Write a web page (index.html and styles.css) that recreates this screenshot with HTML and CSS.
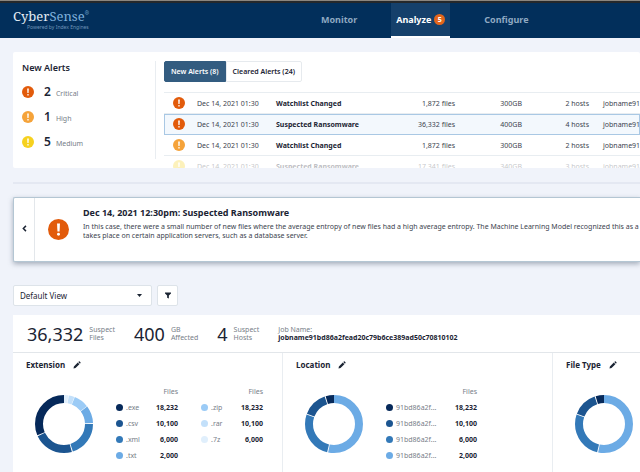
FILE: index.html
```html
<!DOCTYPE html>
<html lang="en">
<head>
  <meta charset="UTF-8">
  <title>CyberSense - Analyze</title>
  <meta name="viewport" content="width=device-width,initial-scale=1">
  <link rel="stylesheet" href="styles.css">
</head>
<body>
  <svg class="defs" aria-hidden="true">
    <symbol id="alert" viewBox="0 0 20 20">
      <circle cx="10" cy="10" r="10" fill="currentColor"/>
      <path d="M8.6 4.2h2.8l-.4 7.6H9z" fill="#fff"/>
      <circle cx="10" cy="14.6" r="1.4" fill="#fff"/>
    </symbol>
    <symbol id="pencil" viewBox="0 0 16 16">
      <path d="M1 15l.8-4L9.6 3.200l3.200 3.200L5 14.200zM10.600 2.200l1.200-1.200q.8-.6 1.600.1l1.500 1.500q.7.800.1 1.600l-1.200 1.200z" fill="currentColor"/>
    </symbol>
  </svg>

  <header class="topbar">
    <a class="logo" href="#">
      <span class="logo-name">Cyber<span class="logo-light">Sense</span><sup>®</sup></span>
      <span class="logo-sub">Powered by Index Engines</span>
    </a>
    <nav class="nav">
      <a href="#">Monitor</a>
      <a href="#" class="active">Analyze <span class="badge">5</span></a>
      <a href="#">Configure</a>
    </nav>
  </header>

  <main>
    <section class="card alerts">
      <div class="summary">
        <h2>New Alerts</h2>
        <ul>
          <li><svg class="icon critical"><use href="#alert"/></svg><b>2</b><span>Critical</span></li>
          <li><svg class="icon high"><use href="#alert"/></svg><b>1</b><span>High</span></li>
          <li><svg class="icon medium"><use href="#alert"/></svg><b>5</b><span>Medium</span></li>
        </ul>
      </div>
      <div class="alert-list">
        <div class="tabs">
          <button type="button" class="selected">New Alerts (8)</button>
          <button type="button">Cleared Alerts (24)</button>
        </div>
        <table class="alert-table">
          <colgroup><col class="c-icon"><col class="c-date"><col class="c-name"><col class="c-files"><col class="c-num"><col class="c-num"><col class="c-job"></colgroup>
          <tbody>
            <tr><td><svg class="icon critical"><use href="#alert"/></svg></td><td>Dec 14, 2021 01:30</td><th scope="row">Watchlist Changed</th><td class="num">1,872 files</td><td class="num">300GB</td><td class="num">2 hosts</td><td class="job">jobname91bd86a2</td></tr>
            <tr class="current"><td><svg class="icon critical"><use href="#alert"/></svg></td><td>Dec 14, 2021 01:30</td><th scope="row">Suspected Ransomware</th><td class="num">36,332 files</td><td class="num">400GB</td><td class="num">4 hosts</td><td class="job">jobname91bd86a2</td></tr>
            <tr><td><svg class="icon high"><use href="#alert"/></svg></td><td>Dec 14, 2021 01:30</td><th scope="row">Watchlist Changed</th><td class="num">1,872 files</td><td class="num">300GB</td><td class="num">2 hosts</td><td class="job">jobname91bd86a2</td></tr>
            <tr class="faded"><td><svg class="icon medium"><use href="#alert"/></svg></td><td>Dec 14, 2021 01:30</td><th scope="row">Suspected Ransomware</th><td class="num">17,341 files</td><td class="num">340GB</td><td class="num">3 hosts</td><td class="job">jobname91bd86a2</td></tr>
          </tbody>
        </table>
      </div>
    </section>

    <hr>

    <section class="card detail">
      <button type="button" class="prev" aria-label="Previous alert">
        <svg viewBox="0 0 8 12"><path d="M6.500 1.500L2 6l4.500 4.500" fill="none" stroke="currentColor" stroke-width="2.500"/></svg>
      </button>
      <svg class="icon-big critical"><use href="#alert"/></svg>
      <div class="detail-text">
        <h2>Dec 14, 2021 12:30pm: Suspected Ransomware</h2>
        <p>In this case, there were a small number of new files where the average entropy of new files had a high average entropy. The Machine Learning Model recognized this as a type<br>takes place on certain application servers, such as a database server.</p>
      </div>
    </section>

    <div class="toolbar">
      <div class="select">
        <select aria-label="View"><option>Default View</option></select>
        <svg viewBox="0 0 10 6"><path d="M0 0h10L5 6z" fill="currentColor"/></svg>
      </div>
      <button type="button" class="filter" aria-label="Filter">
        <svg viewBox="0 0 14 14"><path d="M0 0h14v2.500L9 7v7L5 12V7L0 2.500z" fill="currentColor"/></svg>
      </button>
    </div>

    <section class="card report">
      <div class="stats">
        <div class="stat"><strong>36,332</strong><span>Suspect<br>Files</span></div>
        <div class="stat"><strong>400</strong><span>GB<br>Affected</span></div>
        <div class="stat"><strong>4</strong><span>Suspect<br>Hosts</span></div>
        <div class="jobname">Job Name:<br><b>jobname91bd86a2fead20c79b6ce389ad50c70810102</b></div>
      </div>
      <div class="charts">
        <div class="chart">
          <h3>Extension <a href="#" aria-label="Edit extension"><svg><use href="#pencil"/></svg></a></h3>
          <div class="chart-body">
            <svg class="donut" viewBox="0 0 58 58">
              <g transform="rotate(-90 29 29)">
                <circle class="s7" cx="29" cy="29" r="25" pathLength="360" stroke-dasharray="9 351"/>
                <circle class="s6" cx="29" cy="29" r="25" pathLength="360" stroke-dasharray="11 349" stroke-dashoffset="-10"/>
                <circle class="s5" cx="29" cy="29" r="25" pathLength="360" stroke-dasharray="30 330" stroke-dashoffset="-22"/>
                <circle class="s4" cx="29" cy="29" r="25" pathLength="360" stroke-dasharray="35 325" stroke-dashoffset="-53"/>
                <circle class="s3" cx="29" cy="29" r="25" pathLength="360" stroke-dasharray="72 288" stroke-dashoffset="-90"/>
                <circle class="s2" cx="29" cy="29" r="25" pathLength="360" stroke-dasharray="81 279" stroke-dashoffset="-164"/>
                <circle class="s1" cx="29" cy="29" r="25" pathLength="360" stroke-dasharray="113 247" stroke-dashoffset="-247"/>
              </g>
            </svg>
            <table class="legend">
              <thead><tr><td></td><th scope="col">Files</th></tr></thead>
              <tbody>
                <tr><td><i class="dot s1"></i>.exe</td><td>18,232</td></tr>
                <tr><td><i class="dot s2"></i>.csv</td><td>10,100</td></tr>
                <tr><td><i class="dot s3"></i>.xml</td><td>6,000</td></tr>
                <tr><td><i class="dot s4"></i>.txt</td><td>2,000</td></tr>
              </tbody>
            </table>
            <table class="legend">
              <thead><tr><td></td><th scope="col">Files</th></tr></thead>
              <tbody>
                <tr><td><i class="dot s5"></i>.zip</td><td>18,232</td></tr>
                <tr><td><i class="dot s6"></i>.rar</td><td>10,100</td></tr>
                <tr><td><i class="dot s7"></i>.7z</td><td>6,000</td></tr>
              </tbody>
            </table>
          </div>
        </div>
        <div class="chart">
          <h3>Location <a href="#" aria-label="Edit location"><svg><use href="#pencil"/></svg></a></h3>
          <div class="chart-body">
            <svg class="donut" viewBox="0 0 58 58">
              <g transform="rotate(-90 29 29)">
                <circle class="s4" cx="29" cy="29" r="25" pathLength="360" stroke-dasharray="192 168"/>
                <circle class="s3" cx="29" cy="29" r="25" pathLength="360" stroke-dasharray="95 265" stroke-dashoffset="-194"/>
                <circle class="s2" cx="29" cy="29" r="25" pathLength="360" stroke-dasharray="50 310" stroke-dashoffset="-291"/>
                <circle class="s1" cx="29" cy="29" r="25" pathLength="360" stroke-dasharray="17 343" stroke-dashoffset="-343"/>
              </g>
            </svg>
            <table class="legend wide">
              <thead><tr><td></td><th scope="col">Files</th></tr></thead>
              <tbody>
                <tr><td><i class="dot s1"></i>91bd86a2f...</td><td>18,232</td></tr>
                <tr><td><i class="dot s2"></i>91bd86a2f...</td><td>10,100</td></tr>
                <tr><td><i class="dot s3"></i>91bd86a2f...</td><td>6,000</td></tr>
                <tr><td><i class="dot s4"></i>91bd86a2f...</td><td>2,000</td></tr>
              </tbody>
            </table>
          </div>
        </div>
        <div class="chart">
          <h3>File Type <a href="#" aria-label="Edit file type"><svg><use href="#pencil"/></svg></a></h3>
          <div class="chart-body">
            <svg class="donut" viewBox="0 0 58 58">
              <g transform="rotate(-90 29 29)">
                <circle class="s4" cx="29" cy="29" r="25" pathLength="360" stroke-dasharray="192 168"/>
                <circle class="s3" cx="29" cy="29" r="25" pathLength="360" stroke-dasharray="95 265" stroke-dashoffset="-194"/>
                <circle class="s2" cx="29" cy="29" r="25" pathLength="360" stroke-dasharray="50 310" stroke-dashoffset="-291"/>
                <circle class="s1" cx="29" cy="29" r="25" pathLength="360" stroke-dasharray="17 343" stroke-dashoffset="-343"/>
              </g>
            </svg>
          </div>
        </div>
      </div>
    </section>
  </main>
</body>
</html>
```

FILE: styles.css
```css
* { box-sizing: border-box; }
body { margin: 0; min-height: 100vh; display: flex; flex-direction: column; overflow-x: hidden; border-top: 1px solid #8b8680; background: #f0f3fa; color: #1b2433; font: 7px/9px "Noto Sans", "Open Sans", sans-serif; }
h2, h3, p, ul { margin: 0; padding: 0; }
a { color: inherit; text-decoration: none; }
button, select { font: inherit; color: inherit; margin: 0; cursor: pointer; }
table { border-collapse: collapse; }
.defs { display: none; }

.topbar { display: flex; height: 37px; border-top: 2px solid #25282b; background: #022f5b; }
.logo { display: flex; flex-direction: column; width: 306px; padding: 6px 0 0 13px; }
.logo-name { font: 13px/15px "Noto Serif", "Liberation Serif", serif; color: #e4edf5; }
.logo-light { color: #7fb0dc; }
.logo-name sup { font-size: 5px; line-height: 0; vertical-align: 6px; color: #7fb0dc; }
.logo-sub { padding-left: 14px; font-size: 5px; line-height: 6px; color: #6f95b8; }
.nav { display: flex; gap: 19px; font-size: 9px; font-weight: 700; color: #8fa9c2; }
.nav a { display: flex; align-items: center; gap: 3px; padding: 0 15px; border-bottom: 2px solid transparent; }
.nav .active { padding: 0 5px; background: #15406b; border-color: #fff; color: #fff; }
.badge { width: 11px; height: 11px; border-radius: 50%; background: #e3651b; font-size: 7px; line-height: 11px; text-align: center; }

main { flex: 1; display: flex; flex-direction: column; padding: 14px 0 0 13px; }
.card { background: #fff; }
.icon { display: block; width: 12px; height: 12px; }
.critical { color: #e25b0b; }
.high { color: #f5a33a; }
.medium { color: #f6d11f; }

.alerts { display: flex; height: 116px; padding-top: 9px; overflow: hidden; border-radius: 2px; }
.summary { flex: none; width: 143px; margin-bottom: 9px; padding-left: 9px; border-right: 1px solid #e9edf1; }
.summary h2 { font-size: 9px; line-height: 14px; font-weight: 600; }
.summary ul { list-style: none; padding-top: 4px; }
.summary li { display: flex; align-items: center; height: 25px; }
.summary b { padding-left: 10px; font-size: 12px; font-weight: 600; }
.summary span { padding: 3px 0 0 5px; color: #777e88; }
.alert-list { flex: 1; min-width: 0; padding-left: 8px; }
.tabs { display: flex; height: 21px; margin-bottom: 10px; font-weight: 600; }
.tabs button { padding: 0 6px; border: 1px solid #e6eaee; border-radius: 0 2px 2px 0; background: #fff; }
.tabs .selected { border-color: #335c80; border-radius: 2px 0 0 2px; background: #335c80; color: #fff; }
.alert-table { table-layout: fixed; width: 100%; min-width: 476px; white-space: nowrap; color: #3b434e; }
.alert-table tr { height: 21px; border-top: 1px solid #e8edf1; }
.alert-table .current { background: #f3f8fd; outline: 1px solid #a9c8e4; outline-offset: -1px; }
.alert-table .faded { opacity: .3; }
.alert-table td, .alert-table th { padding: 0; text-align: left; }
.alert-table th { font-weight: 700; color: #1b2433; }
.alert-table .icon { margin-left: 9px; }
.alert-table .num { text-align: right; }
.alert-table .job { padding-left: 14px; }
.c-icon { width: 33px; }
.c-date { width: 79px; }
.c-name { width: 109px; }
.c-files { width: 70px; }
.c-num { width: 67px; }

hr { width: 100%; height: 2px; margin: 14px 0 13px; border: 0; background: #e4e8f2; }

.detail { display: flex; height: 65px; border: 1px solid #b4c6d3; border-right: 0; border-radius: 2px 0 0 2px; box-shadow: 0 2px 5px #5a687c80; }
.prev { flex: none; width: 21px; padding: 0; border: 0; border-right: 1px solid #e3e7eb; background: none; }
.prev svg { width: 5px; height: 7px; }
.icon-big { flex: none; align-self: center; width: 21px; height: 21px; margin: 0 14px 0 13px; }
.detail-text { flex: 1; min-width: 0; padding-top: 8px; overflow: hidden; white-space: nowrap; }
.detail-text h2 { font-size: 9px; line-height: 14px; font-weight: 700; }
.detail-text p { padding-top: 2px; color: #3b434e; }

.toolbar { display: flex; gap: 5px; margin: 23px 0 9px; }
.select { display: grid; align-items: center; width: 139px; }
.select > * { grid-area: 1 / 1; }
.select select { appearance: none; height: 21px; padding: 0 6px; border: 1px solid #dde3e9; border-radius: 2px; background: #fff; font-size: 8px; }
.select svg { justify-self: end; width: 5px; height: 3px; margin-right: 10px; pointer-events: none; }
.filter { display: grid; place-items: center; width: 21px; height: 21px; padding: 0; border: 1px solid #dde3e9; border-radius: 2px; background: #fff; }
.filter svg { width: 6px; height: 7px; }

.report { flex: 1; display: flex; flex-direction: column; overflow: hidden; }
.stats { display: flex; align-items: center; gap: 19px; height: 38px; padding-left: 14px; border-bottom: 1px solid #e2e6ea; white-space: nowrap; }
.stat { display: flex; align-items: center; gap: 6px; }
.stat strong { font-size: 18px; line-height: 24px; font-weight: 400; }
.stat span, .jobname { line-height: 8px; color: #777e88; }
.jobname b { color: #1b2433; }
.charts { flex: 1; display: flex; }
.chart { flex: 0 0 270px; padding: 6px 0 0 13px; border-right: 1px solid #e9edf1; }
.chart h3 { display: flex; align-items: center; gap: 8px; font-size: 8px; line-height: 11px; font-weight: 700; }
.chart h3 svg { display: block; width: 8px; height: 8px; }
.chart-body { display: flex; gap: 23px; padding: 13px 0 0 9px; }
.donut { flex: none; width: 58px; height: 58px; margin-top: 12px; }
.donut circle { fill: none; stroke: currentColor; stroke-width: 8; }
.legend { align-self: flex-start; width: 62px; color: #777e88; }
.legend.wide { width: 91px; }
.legend tr { height: 16px; }
.legend td, .legend th { padding: 0; font-weight: 400; }
.legend th, .legend td:last-child { text-align: right; }
.legend tbody td:last-child { font-weight: 700; color: #1b2433; }
.dot { display: inline-block; width: 7px; height: 7px; margin-right: 3px; border-radius: 50%; background: currentColor; vertical-align: -1px; }
.s1 { color: #06295a; }
.s2 { color: #1c5590; }
.s3 { color: #3379b8; }
.s4 { color: #6cabe5; }
.s5 { color: #9bcbf6; }
.s6 { color: #c3e0fa; }
.s7 { color: #e0effc; }
```
